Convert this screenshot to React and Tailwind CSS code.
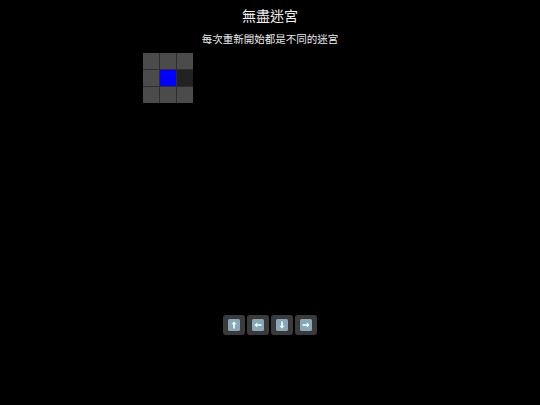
import React, { useState } from 'react'

const SIZE = 3

function ArrowIcon({ dir }) {
  // emoji-like keycap: blue-grey square with a white arrow
  const rot = { up: 0, right: 90, down: 180, left: 270 }[dir]
  return (
    <svg width="12" height="12" viewBox="0 0 12 12">
      <rect x="0" y="0" width="12" height="12" rx="1.5" fill="#86a8b8" />
      <g transform={`rotate(${rot} 6 6)`}>
        <path d="M6 2.5 L8.6 5.2 H6.8 V9.5 H5.2 V5.2 H3.4 Z" fill="#ffffff" />
      </g>
    </svg>
  )
}

function App() {
  const [pos] = useState({ r: 1, c: 1 })
  const walls = [[1, 2]]

  const cellColor = (r, c) => {
    if (r === pos.r && c === pos.c) return 'bg-[#0000ff]'
    if (walls.some(([wr, wc]) => wr === r && wc === c)) return 'bg-[#222222]'
    return 'bg-[#4b4b4b]'
  }

  const cells = []
  for (let r = 0; r < SIZE; r++) {
    for (let c = 0; c < SIZE; c++) {
      cells.push(<div key={`${r}-${c}`} className={`w-[16px] h-[16px] ${cellColor(r, c)}`} />)
    }
  }

  return (
    <div className="w-full h-[405px] bg-black text-white flex flex-col items-center font-['Noto_Sans_CJK_TC','Noto_Sans',sans-serif]">
      <h1 className="mt-[6px] text-[14px] leading-[18px] text-[#f2f2f2]">無盡迷宮</h1>
      <p className="mt-[8px] text-[10.5px] leading-[14px] text-[#eeeeee]">每次重新開始都是不同的迷宮</p>

      <div className="w-[254px] h-[262px] mt-[7px]">
        <div className="grid grid-cols-3 gap-px bg-[#2e2e2e] w-max">
          {cells}
        </div>
      </div>

      <div className="flex gap-[2px]">
        {['up', 'left', 'down', 'right'].map((d) => (
          <button key={d} className="w-[22px] h-[20px] rounded-[3px] bg-[#3a3a3a] flex items-center justify-center">
            <ArrowIcon dir={d} />
          </button>
        ))}
      </div>
    </div>
  )
}

export default App
